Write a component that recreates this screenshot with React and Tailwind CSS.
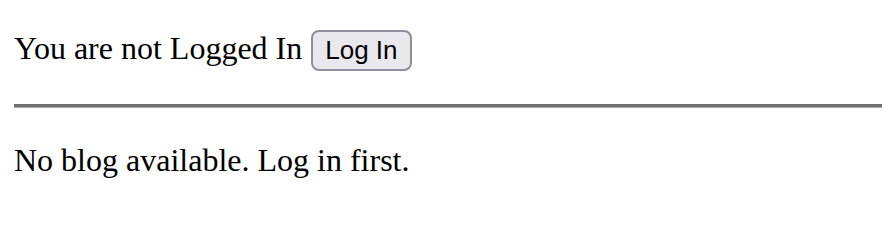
export default function App() {
  return (
    <div className="w-[896px] h-[216px] bg-white text-black px-[14px] pt-[30px]" style={{ fontFamily: '"Liberation Serif", "Times New Roman", serif' }}>
      <div className="flex items-baseline h-[41px]">
        <span className="text-[32px] leading-[36px]">You are not Logged In</span>
        <button className="ml-[9px] h-[41px] px-[12px] flex items-center border-2 border-[#8f8f9d] bg-[#e9e9ed] rounded-[8px] text-[26px] leading-[29px] text-black" style={{ fontFamily: '"Liberation Sans", Arial, sans-serif' }}>
          Log In
        </button>
      </div>
      <div className="mt-[33px] h-[4px] border-t-[3px] border-[#6f6f6f] border-b border-b-[#a8a8a8]" />
      <div className="mt-[34px] text-[32px] leading-[36px]">No blog available. Log in first.</div>
    </div>
  );
}
